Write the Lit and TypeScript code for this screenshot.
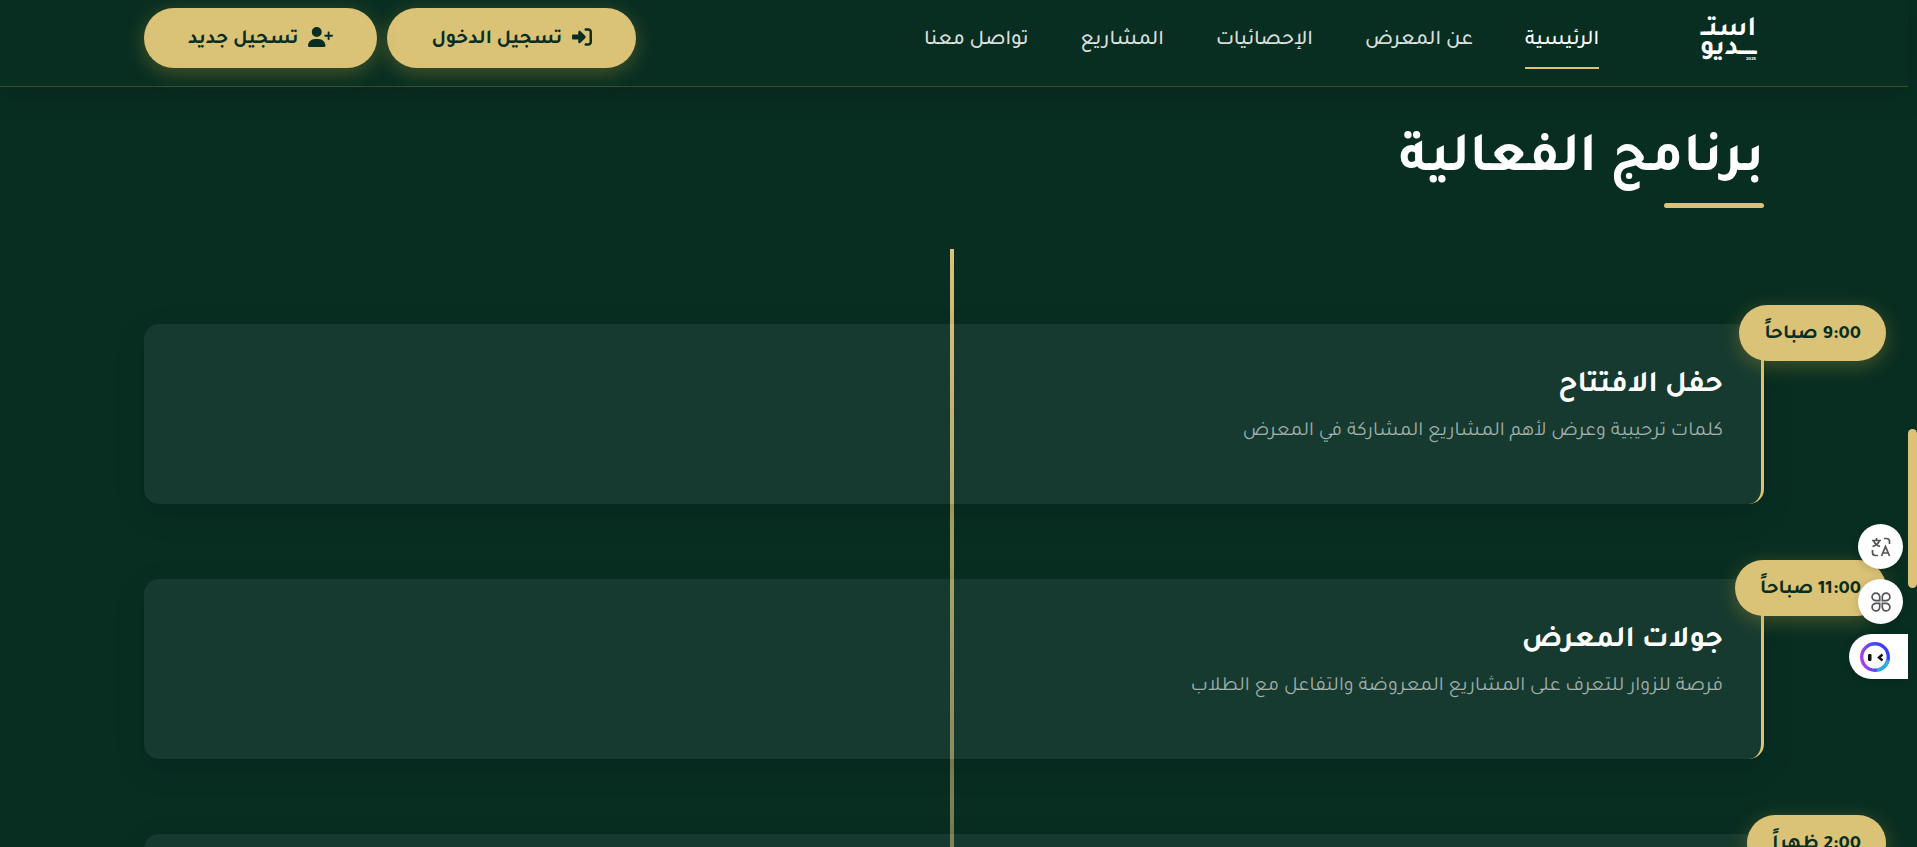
import { LitElement, html, css } from "lit";
import { customElement } from "lit/decorators.js";

interface Slot { time: string; title: string; text: string; }

const LINKS = ["الرئيسية", "عن المعرض", "الإحصائيات", "المشاريع", "تواصل معنا"];

const SLOTS: Slot[] = [
  { time: "9:00 صباحاً", title: "حفل الافتتاح", text: "كلمات ترحيبية وعرض لأهم المشاريع المشاركة في المعرض" },
  { time: "11:00 صباحاً", title: "جولات المعرض", text: "فرصة للزوار للتعرف على المشاريع المعروضة والتفاعل مع الطلاب" },
  { time: "2:00 ظهراً", title: "", text: "" },
];

@customElement("app-root")
export class AppRoot extends LitElement {
  static styles = css`
    :host {
      --gold: #dac276;
      --bg: #082e22;
      --glow: 0 5px 20px rgba(212, 175, 55, 0.3);
      display: block;
      position: relative;
      height: 100vh;
      overflow: hidden;
      background: var(--bg);
      color: #fff;
      font-family: "Tajawal", "DejaVu Sans", "Noto Sans", sans-serif;
      direction: rtl;
    }
    * { box-sizing: border-box; }
    .page { margin-right: 9px; }
    .wrap { width: 85%; max-width: 1620px; margin: 0 auto; }
    .header {
      position: relative;
      z-index: 2;
      border-bottom: 1px solid rgba(212, 175, 55, 0.25);
      box-shadow: 0 5px 30px rgba(0, 0, 0, 0.2);
      background: var(--bg);
    }
    .bar { display: flex; align-items: center; height: 86px; padding-bottom: 10px; }
    .logo { display: block; width: 70px; height: 56px; flex: none; overflow: visible; }
    .nav { display: flex; gap: 52px; margin-right: 95px; flex: 1; }
    .nav a {
      color: rgba(255, 255, 255, 0.85);
      text-decoration: none;
      font-size: 21px;
      font-weight: 500;
      line-height: 30px;
      padding: 19px 0 11px;
      border-bottom: 2px solid transparent;
      white-space: nowrap;
    }
    .nav a.active { color: #fff; border-color: var(--gold); }
    .actions { display: flex; gap: 10px; }
    .btn {
      display: flex;
      align-items: center;
      justify-content: center;
      gap: 10px;
      height: 60px;
      padding: 0 44px;
      border: 0;
      border-radius: 30px;
      background: var(--gold);
      color: var(--bg);
      font: bold 20px/30px "Tajawal", "DejaVu Sans", sans-serif;
      box-shadow: var(--glow);
      white-space: nowrap;
    }
    .btn svg { display: block; fill: currentColor; margin-bottom: 2px; }
    .btn span { padding-top: 3px; }
    .heading { margin: 0; padding-top: 35px; font-size: 56px; line-height: 80px; font-weight: bold; }
    .rule { width: 100px; height: 5px; margin-top: 1px; border-radius: 3px; background: var(--gold); }
    .timeline { position: relative; margin: 41px 0 0; padding: 75px 0 0; list-style: none; }
    .timeline::before {
      content: "";
      position: absolute;
      top: 0;
      left: calc(50% - 4px);
      width: 4px;
      height: 1000px;
      background: linear-gradient(to bottom, var(--gold), rgba(218, 194, 118, 0.2));
    }
    .card {
      position: relative;
      min-height: 180px;
      margin-bottom: 75px;
      padding: 38px;
      border-right: 3px solid var(--gold);
      border-radius: 15px;
      background: rgba(255, 255, 255, 0.06);
      box-shadow: 0 10px 30px rgba(0, 0, 0, 0.15);
    }
    .time {
      position: absolute;
      top: -19px;
      right: -125px;
      padding: 4px 25px 0;
      border-radius: 28px;
      background: var(--gold);
      color: var(--bg);
      font-size: 20px;
      font-weight: bold;
      line-height: 52px;
      white-space: nowrap;
      box-shadow: var(--glow);
    }
    .card h3 { margin: 0; font-size: 30px; line-height: 50px; }
    .card p { margin: 2px 0 0; font-size: 20px; line-height: 36px; color: rgba(255, 255, 255, 0.6); }
    .scroll { position: absolute; z-index: 3; right: 0; top: 429px; width: 9px; height: 159px; border-radius: 5px; background: var(--gold); }
    .dock {
      position: absolute;
      z-index: 3;
      right: 9px;
      top: 524px;
      display: flex;
      flex-direction: column;
      align-items: flex-start;
      gap: 10px;
    }
    .tool {
      display: grid;
      place-items: center;
      width: 45px;
      height: 45px;
      margin-right: 5px;
      padding: 0;
      border: 0;
      border-radius: 23px;
      background: #fff;
      box-shadow: 0 2px 8px rgba(0, 0, 0, 0.15);
    }
    .tool.bot { width: 59px; margin-right: 0; padding-left: 11px; border-radius: 23px 0 0 23px; justify-items: start; direction: ltr; }
  `;

  private logo() {
    return html`<svg class="logo" viewBox="0 0 70 56" role="img" aria-label="استديو 2025" fill="#fff" font-family="Tajawal, DejaVu Sans" font-weight="bold" direction="rtl">
      <text x="62" y="25" font-size="28">استــ</text>
      <text x="62" y="44" font-size="28">ـــــديو</text>
      <text x="62" y="50" font-size="5" direction="ltr" text-anchor="end">2025</text>
    </svg>`;
  }

  private loginIcon() {
    return html`<svg width="20" height="20" viewBox="0 0 512 512" aria-hidden="true"><path d="M217.900 105.900L340.700 228.700c7.200 7.200 11.300 17.100 11.300 27.300s-4.100 20.100-11.300 27.300L217.900 406.100c-6.400 6.400-15 9.900-24 9.900-18.700 0-33.900-15.200-33.900-33.900V320H32c-17.700 0-32-14.300-32-32v-64c0-17.700 14.300-32 32-32h128v-62.100c0-18.700 15.200-33.900 33.900-33.900 9 0 17.600 3.600 24 9.900zM352 416h64c17.700 0 32-14.300 32-32V128c0-17.700-14.300-32-32-32h-64c-17.700 0-32-14.300-32-32s14.300-32 32-32h64c53 0 96 43 96 96v256c0 53-43 96-96 96h-64c-17.700 0-32-14.300-32-32s14.300-32 32-32z"/></svg>`;
  }

  private userIcon() {
    return html`<svg width="25" height="20" viewBox="0 0 640 512" aria-hidden="true"><path d="M96 128a128 128 0 1 1 256 0A128 128 0 1 1 96 128zM0 482.300C0 383.800 79.800 304 178.300 304h91.400C368.200 304 448 383.800 448 482.300c0 16.400-13.300 29.700-29.700 29.700H29.700C13.300 512 0 498.700 0 482.300zM504 312V248H440c-13.300 0-24-10.700-24-24s10.700-24 24-24h64V136c0-13.300 10.700-24 24-24s24 10.700 24 24v64h64c13.300 0 24 10.700 24 24s-10.700 24-24 24H552v64c0 13.300-10.700 24-24 24s-24-10.700-24-24z"/></svg>`;
  }

  render() {
    return html`
      <div class="page">
        <header class="header">
          <div class="wrap bar">
            ${this.logo()}
            <nav class="nav">
              ${LINKS.map((l, i) => html`<a href="#" class=${i === 0 ? "active" : ""}>${l}</a>`)}
            </nav>
            <div class="actions">
              <button class="btn" type="button">${this.loginIcon()}<span>تسجيل الدخول</span></button>
              <button class="btn" type="button">${this.userIcon()}<span>تسجيل جديد</span></button>
            </div>
          </div>
        </header>
        <main class="wrap">
          <h2 class="heading">برنامج الفعالية</h2>
          <div class="rule"></div>
          <ol class="timeline">
            ${SLOTS.map(
              (s) => html`<li class="card">
                <time class="time">${s.time}</time>
                ${s.title ? html`<h3>${s.title}</h3><p>${s.text}</p>` : ""}
              </li>`
            )}
          </ol>
        </main>
      </div>
      <div class="scroll"></div>
      <div class="dock">
        <button class="tool" type="button" aria-label="ترجمة">
          <svg width="20" height="20" viewBox="0 0 20 20" fill="none" stroke="#54545a" stroke-width="1.700">
            <path d="M1 3.500h9M5.500 1v2.500M2.500 3.500c1 3 3.500 5 6.500 6M8.500 3.500c-1 3-3.500 5-7 6M13 1.500h2.500a3 3 0 0 1 3 3V7M1.500 13v2.500a3 3 0 0 0 3 3H7M10.500 19l4-9.500 4 9.500M12 16h5"/>
          </svg>
        </button>
        <button class="tool" type="button" aria-label="التطبيقات">
          <svg width="20" height="20" viewBox="0 0 20 20" fill="none" stroke="#54545a" stroke-width="1.700">
            <path d="M8.700 8.700H5a3.800 3.800 0 1 1 3.700-3.800zM11.300 8.700H15a3.800 3.800 0 1 0-3.700-3.800zM8.700 11.300H5a3.800 3.800 0 1 0 3.700 3.800zM11.300 11.300H15a3.800 3.800 0 1 1-3.700 3.800z"/>
          </svg>
        </button>
        <button class="tool bot" type="button" aria-label="المساعد">
          <svg width="30" height="30" viewBox="0 0 30 30">
            <defs><linearGradient id="ring" x1="0" y1="0.700" x2="1" y2="0.500">
              <stop offset="0" stop-color="#b43af0"/><stop offset="0.450" stop-color="#4a4cf5"/><stop offset="1" stop-color="#3a3cf8"/>
            </linearGradient></defs>
            <circle cx="15" cy="15" r="13.300" fill="#fff" stroke="url(#ring)" stroke-width="3.400"/>
            <path d="M17 28.200A13.300 13.300 0 0 0 28 18" fill="none" stroke="#25aee8" stroke-width="3.400"/>
            <rect x="8" y="12" width="3.500" height="7" rx="1.200" fill="#111"/>
            <path d="M22.500 12.500l-3.500 3 3.500 3" fill="none" stroke="#111" stroke-width="2.400"/>
          </svg>
        </button>
      </div>
    `;
  }
}
